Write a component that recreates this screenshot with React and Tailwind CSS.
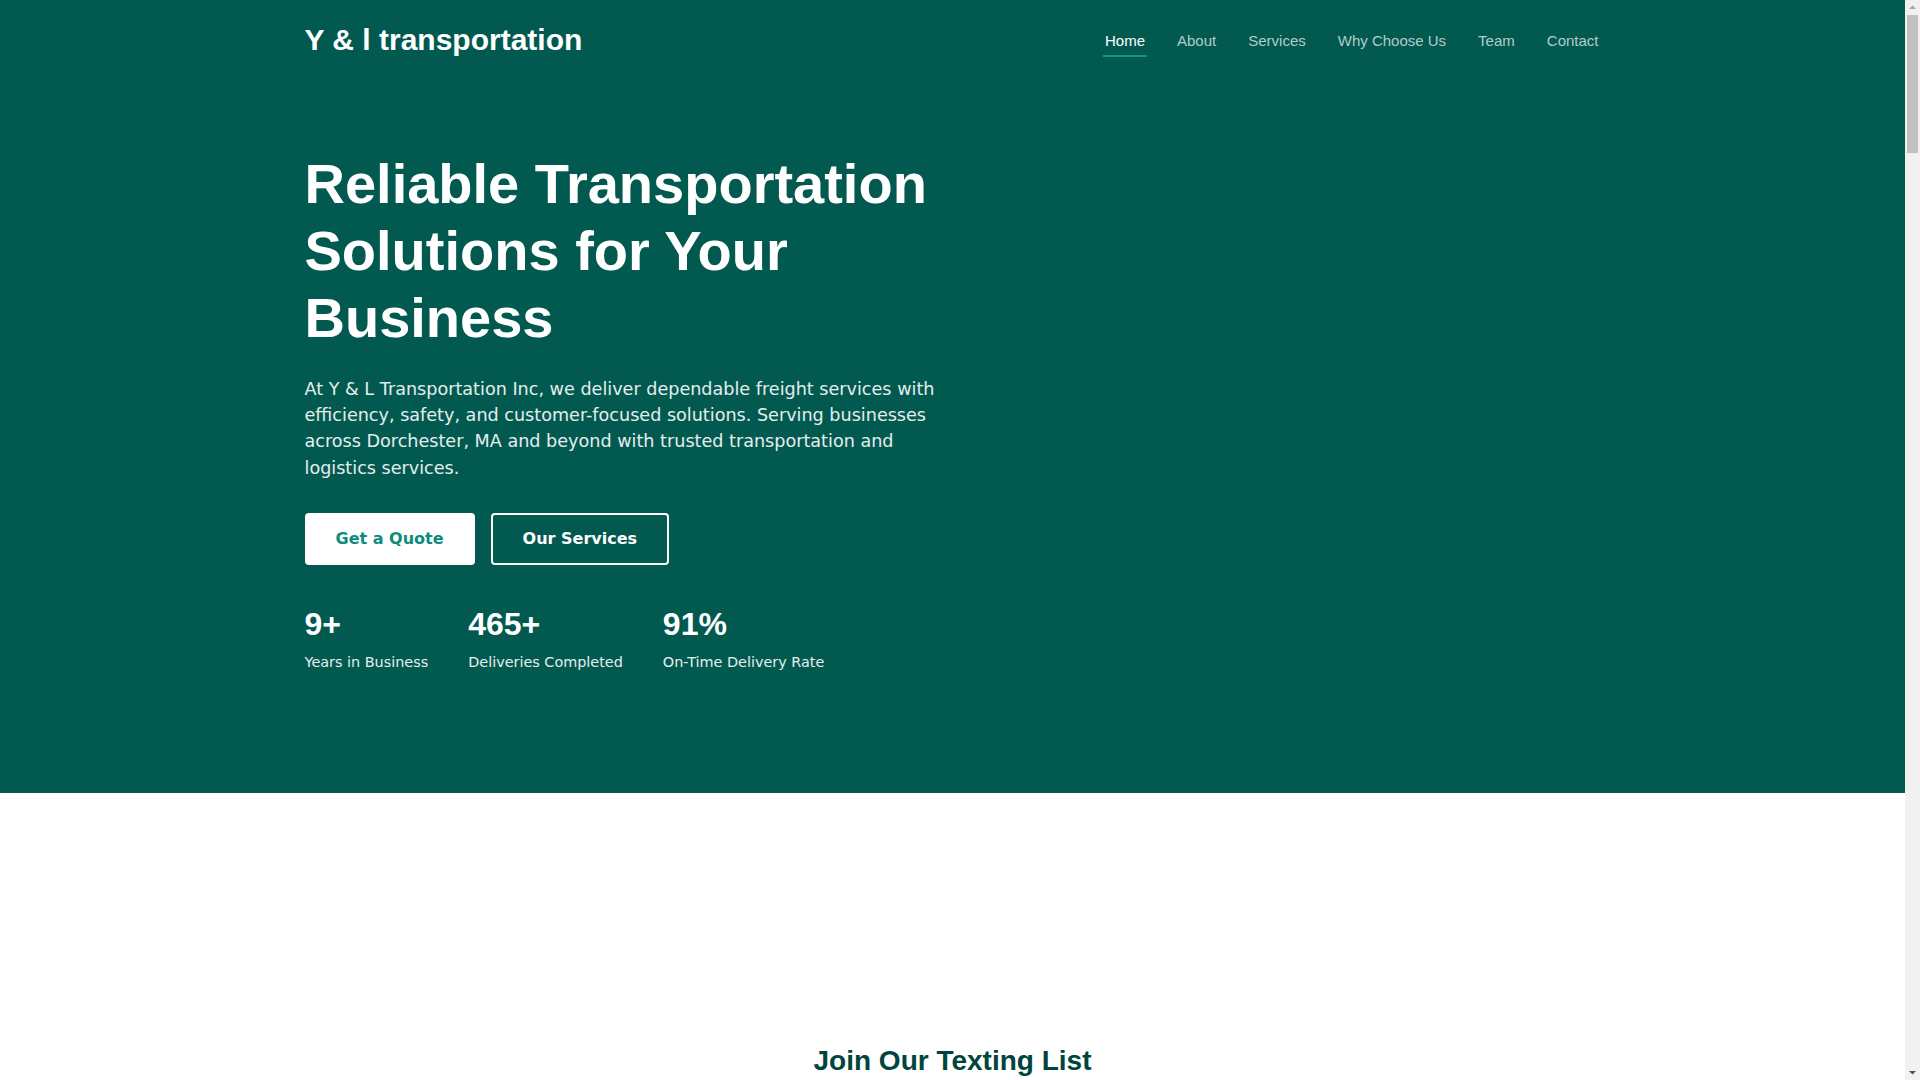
import React from 'react';

const navLinks = ['Home', 'About', 'Services', 'Why Choose Us', 'Team', 'Contact'];

const stats = [
  { value: '9+', label: 'Years in Business' },
  { value: '465+', label: 'Deliveries Completed' },
  { value: '91%', label: 'On-Time Delivery Rate' },
];

const services = [
  { title: 'Freight Transportation', description: 'Dependable local and regional freight hauling for businesses of every size.' },
  { title: 'Logistics Support', description: 'Planning, scheduling and coordination that keeps your supply chain moving.' },
  { title: 'Dedicated Deliveries', description: 'Time-sensitive, dedicated runs handled with care from pickup to drop-off.' },
];

const reasons = [
  { title: 'Safety First', description: 'Trained drivers and well-maintained equipment on every route.' },
  { title: 'On-Time Delivery', description: 'A 91% on-time record our customers count on.' },
  { title: 'Customer Focused', description: 'Clear communication and solutions built around your needs.' },
  { title: 'Local Experience', description: 'Years of experience serving Dorchester, MA and beyond.' },
];

// classic browser scrollbar, as seen in the screenshot
const Scrollbar = () => (
  <div className="fixed top-0 right-0 w-[15px] h-screen bg-[#f1f1f1] flex flex-col items-center">
    <svg width="15" height="15" viewBox="0 0 15 15" className="shrink-0">
      <path d="M4 9 L7.5 5.5 L11 9 Z" fill="#a3a3a3" />
    </svg>
    <div className="w-[11px] h-[138px] bg-[#c1c1c1] mx-auto"></div>
    <div className="flex-1"></div>
    <svg width="15" height="15" viewBox="0 0 15 15" className="shrink-0">
      <path d="M4 6 L7.5 9.5 L11 6 Z" fill="#505050" />
    </svg>
  </div>
);

const App = () => {
  return (
    <div className="mr-[15px] font-['DejaVu_Sans',sans-serif] text-gray-800 bg-white">
      {/* Hero */}
      <section id="home" className="bg-[#01594f] text-white">
        <div className="max-w-[1320px] mx-auto px-3">
          <nav className="h-[80px] flex items-center justify-between font-['Liberation_Sans',Arial,sans-serif]">
            <a href="#home" className="text-[30px] font-bold text-white leading-none">
              Y &amp; l transportation
            </a>
            <ul className="flex items-center gap-[28px]">
              {navLinks.map((link, index) => (
                <li key={link}>
                  <a
                    href={`#${link.toLowerCase().replace(/ /g, '-')}`}
                    className={`relative block px-[2px] py-2 text-[15px] leading-[17px] ${
                      index === 0 ? 'text-white' : 'text-white/70'
                    }`}
                  >
                    {link}
                    {index === 0 && (
                      <span className="absolute left-0 right-0 bottom-0 h-[2px] bg-[#0f9385]"></span>
                    )}
                  </a>
                </li>
              ))}
            </ul>
          </nav>

          <div className="grid grid-cols-2 pt-[70px] pb-[120px]">
            <div>
              <h1 className="font-['Liberation_Sans',Arial,sans-serif] text-[56px] leading-[1.2] font-bold mb-6">
                Reliable Transportation Solutions for Your Business
              </h1>
              <p className="text-[17.6px] leading-[1.5] text-white/90 mb-8">
                At Y &amp; L Transportation Inc, we deliver dependable freight services with efficiency, safety, and
                customer-focused solutions. Serving businesses across Dorchester, MA and beyond with trusted
                transportation and logistics services.
              </p>
              <div className="flex gap-4">
                <a
                  href="#contact"
                  className="px-[29px] py-3 border-2 border-white bg-white text-[#0d8b7e] font-bold text-base leading-6 rounded"
                >
                  Get a Quote
                </a>
                <a
                  href="#services"
                  className="px-[30px] py-3 border-2 border-white text-white font-bold text-base leading-6 rounded"
                >
                  Our Services
                </a>
              </div>
              <div className="flex gap-10 mt-10">
                {stats.map((stat) => (
                  <div key={stat.label}>
                    <div className="font-['Liberation_Sans',Arial,sans-serif] text-[32px] leading-[1.2] font-bold mb-2">
                      {stat.value}
                    </div>
                    <div className="text-[14.4px] leading-[1.5] text-white/90">{stat.label}</div>
                  </div>
                ))}
              </div>
            </div>
            <div></div>
          </div>
        </div>
      </section>

      {/* Texting list */}
      <section id="texting" className="pt-[251px] pb-24">
        <div className="max-w-[1320px] mx-auto px-3 text-center">
          <h2 className="font-['Liberation_Sans',Arial,sans-serif] text-[28px] leading-[1.2] font-bold text-[#00453d] mb-6">
            Join Our Texting List
          </h2>
          <p className="text-base text-gray-600 mb-8 max-w-xl mx-auto">
            Get shipping updates, schedule changes and special offers sent straight to your phone.
          </p>
          <form className="flex justify-center gap-3 max-w-xl mx-auto">
            <input
              type="tel"
              placeholder="Your phone number"
              className="flex-1 border border-gray-300 rounded px-4 py-3 text-base"
            />
            <button type="button" className="bg-[#01594f] text-white font-bold px-7 py-3 rounded">
              Subscribe
            </button>
          </form>
        </div>
      </section>

      {/* About */}
      <section id="about" className="py-32 bg-gray-50">
        <div className="max-w-[1320px] mx-auto px-3 grid grid-cols-2 gap-16 items-center min-h-[700px]">
          <div>
            <h2 className="font-['Liberation_Sans',Arial,sans-serif] text-[40px] font-bold text-[#00453d] mb-6">
              About Us
            </h2>
            <p className="text-[17px] leading-relaxed text-gray-600 mb-4">
              Y &amp; L Transportation Inc has been moving freight for businesses in Dorchester, MA for more than nine
              years. We combine local knowledge with a commitment to safety and reliability.
            </p>
            <p className="text-[17px] leading-relaxed text-gray-600">
              From single loads to recurring routes, our team treats every shipment as if it were our own.
            </p>
          </div>
          <div className="h-[460px] rounded-lg bg-[#01594f]/10"></div>
        </div>
      </section>

      {/* Services */}
      <section id="services" className="py-32">
        <div className="max-w-[1320px] mx-auto px-3 min-h-[800px]">
          <h2 className="font-['Liberation_Sans',Arial,sans-serif] text-[40px] font-bold text-[#00453d] text-center mb-16">
            Our Services
          </h2>
          <div className="grid grid-cols-3 gap-8">
            {services.map((service) => (
              <div key={service.title} className="border border-gray-200 rounded-lg p-8 min-h-[320px]">
                <div className="w-14 h-14 rounded-full bg-[#01594f] mb-6"></div>
                <h3 className="font-['Liberation_Sans',Arial,sans-serif] text-2xl font-bold text-[#00453d] mb-3">
                  {service.title}
                </h3>
                <p className="text-gray-600 leading-relaxed">{service.description}</p>
              </div>
            ))}
          </div>
        </div>
      </section>

      {/* Why choose us */}
      <section id="why-choose-us" className="py-32 bg-[#01594f] text-white">
        <div className="max-w-[1320px] mx-auto px-3 min-h-[800px]">
          <h2 className="font-['Liberation_Sans',Arial,sans-serif] text-[40px] font-bold text-center mb-16">
            Why Choose Us
          </h2>
          <div className="grid grid-cols-2 gap-8">
            {reasons.map((reason) => (
              <div key={reason.title} className="bg-white/10 rounded-lg p-8 min-h-[260px]">
                <h3 className="font-['Liberation_Sans',Arial,sans-serif] text-2xl font-bold mb-3">{reason.title}</h3>
                <p className="text-white/80 leading-relaxed">{reason.description}</p>
              </div>
            ))}
          </div>
        </div>
      </section>

      {/* Team */}
      <section id="team" className="py-32">
        <div className="max-w-[1320px] mx-auto px-3 min-h-[900px]">
          <h2 className="font-['Liberation_Sans',Arial,sans-serif] text-[40px] font-bold text-[#00453d] text-center mb-16">
            Our Team
          </h2>
          <div className="grid grid-cols-3 gap-8">
            {['Operations', 'Dispatch', 'Customer Service'].map((role) => (
              <div key={role} className="text-center">
                <div className="h-[360px] rounded-lg bg-gray-100 mb-6"></div>
                <h3 className="font-['Liberation_Sans',Arial,sans-serif] text-xl font-bold text-[#00453d]">{role}</h3>
              </div>
            ))}
          </div>
        </div>
      </section>

      {/* Contact */}
      <section id="contact" className="py-32 bg-gray-50">
        <div className="max-w-[1320px] mx-auto px-3 min-h-[900px]">
          <h2 className="font-['Liberation_Sans',Arial,sans-serif] text-[40px] font-bold text-[#00453d] text-center mb-16">
            Contact Us
          </h2>
          <div className="max-w-2xl mx-auto space-y-4">
            <input className="w-full border border-gray-300 rounded px-4 py-3" placeholder="Name" />
            <input className="w-full border border-gray-300 rounded px-4 py-3" placeholder="Email" />
            <textarea className="w-full border border-gray-300 rounded px-4 py-3 h-48" placeholder="Message" />
            <button type="button" className="bg-[#01594f] text-white font-bold px-8 py-3 rounded">
              Send Message
            </button>
          </div>
        </div>
      </section>

      <footer className="bg-[#00453d] text-white/80 py-16">
        <div className="max-w-[1320px] mx-auto px-3 text-center text-sm">
          © Y &amp; L Transportation Inc. Dorchester, MA.
        </div>
      </footer>

      <Scrollbar />
    </div>
  );
};

export default App;
